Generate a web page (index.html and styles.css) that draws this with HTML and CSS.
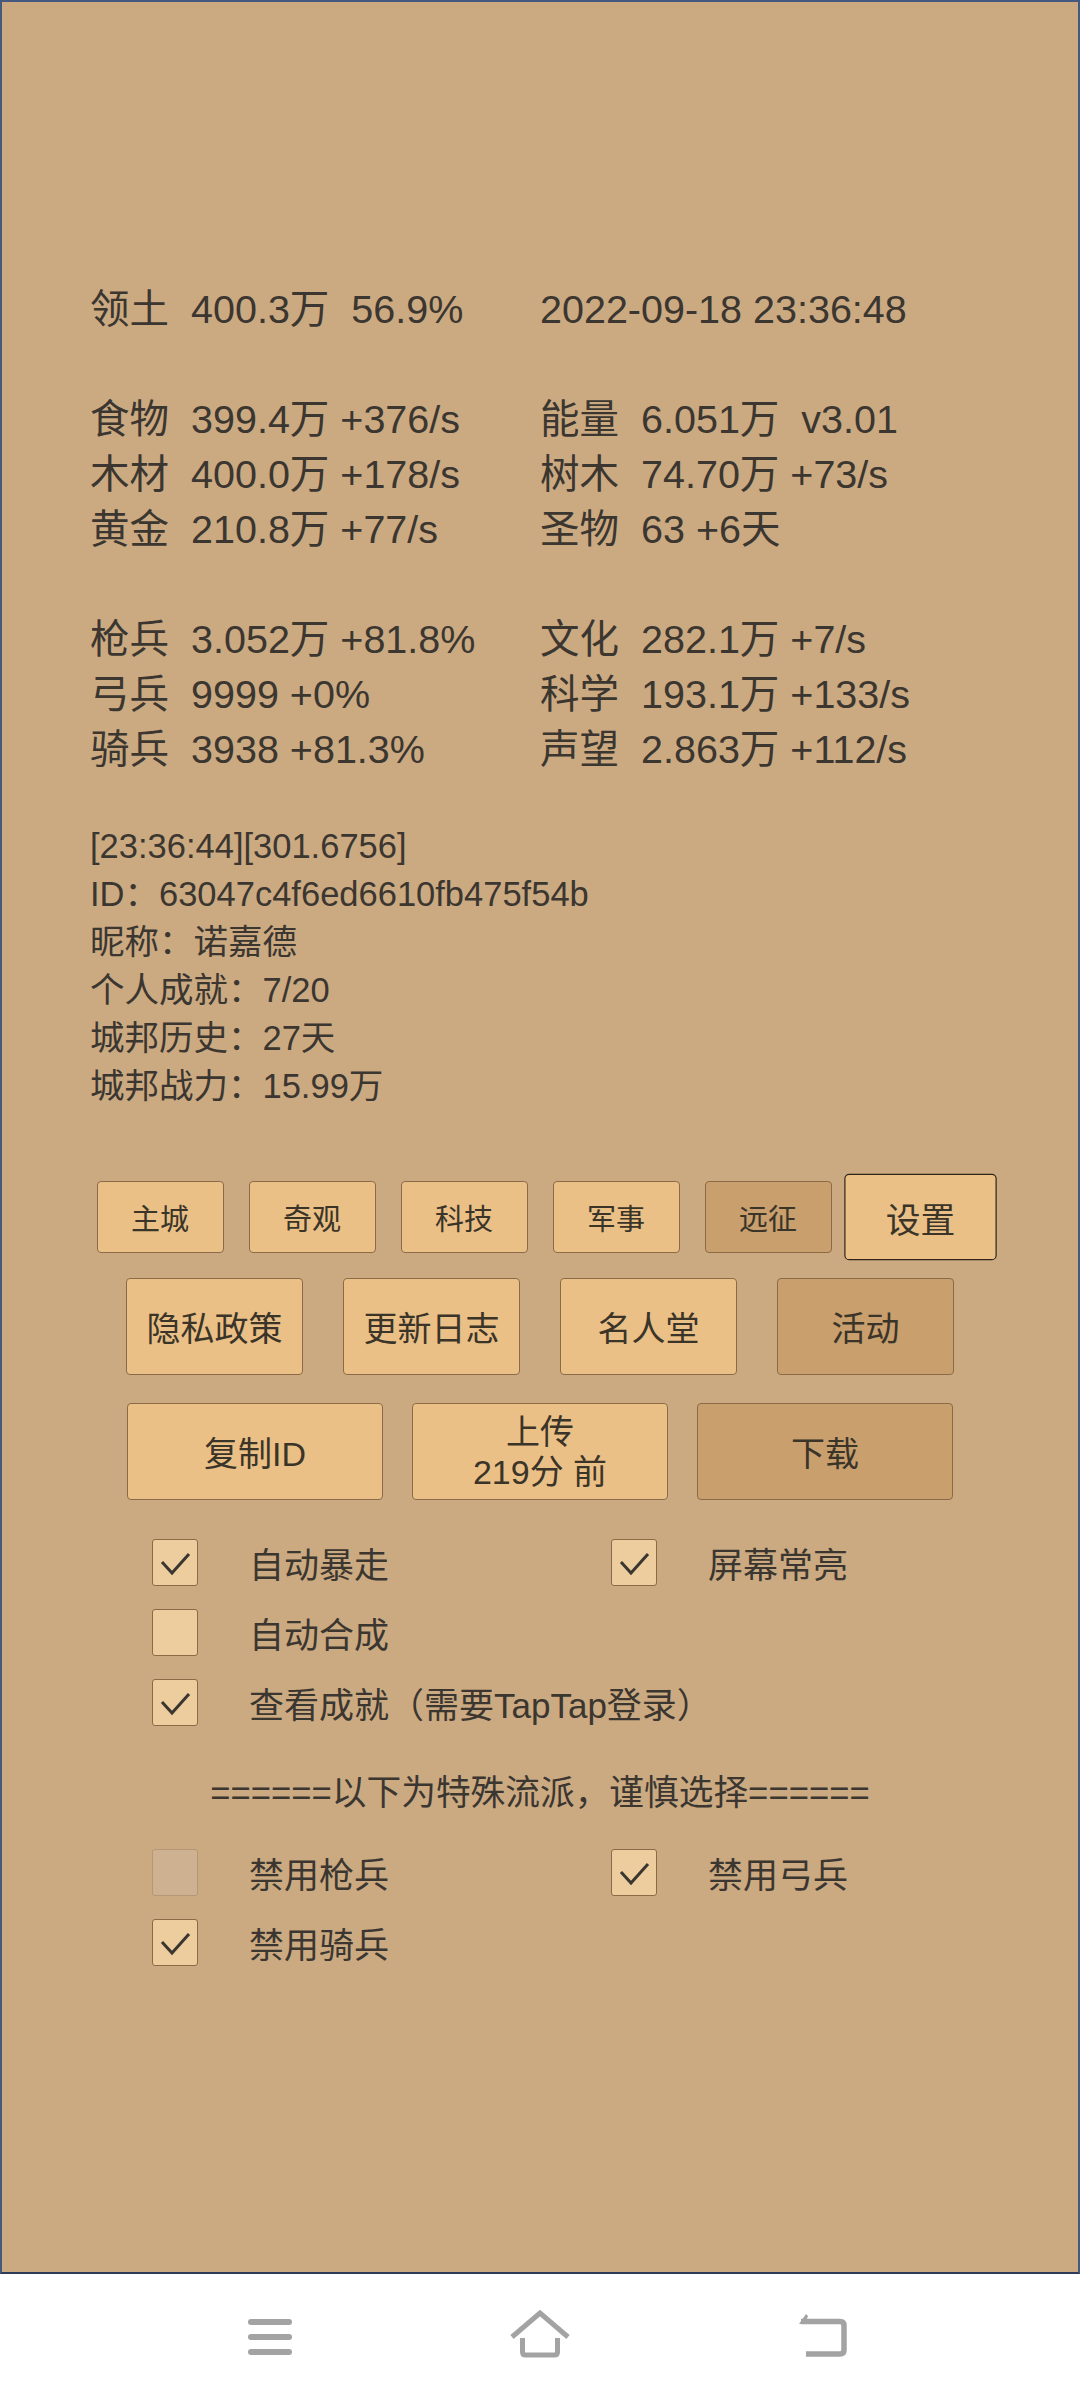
FILE: index.html
```html
<!DOCTYPE html>
<html lang="zh">
<head>
<meta charset="utf-8">
<title>城邦</title>
<link rel="stylesheet" href="styles.css">
</head>
<body>
<div class="panel">
  <div class="stats">
    <div class="cell"><span class="k">领土</span><span class="v">400.3万  56.9%</span></div>
    <div class="cell"><span class="v">2022-09-18 23:36:48</span></div>
    <div class="blank"></div>
    <div class="cell"><span class="k">食物</span><span class="v">399.4万 +376/s</span></div>
    <div class="cell"><span class="k">能量</span><span class="v">6.051万  v3.01</span></div>
    <div class="cell"><span class="k">木材</span><span class="v">400.0万 +178/s</span></div>
    <div class="cell"><span class="k">树木</span><span class="v">74.70万 +73/s</span></div>
    <div class="cell"><span class="k">黄金</span><span class="v">210.8万 +77/s</span></div>
    <div class="cell"><span class="k">圣物</span><span class="v">63 +6天</span></div>
    <div class="blank"></div>
    <div class="cell"><span class="k">枪兵</span><span class="v">3.052万 +81.8%</span></div>
    <div class="cell"><span class="k">文化</span><span class="v">282.1万 +7/s</span></div>
    <div class="cell"><span class="k">弓兵</span><span class="v">9999 +0%</span></div>
    <div class="cell"><span class="k">科学</span><span class="v">193.1万 +133/s</span></div>
    <div class="cell"><span class="k">骑兵</span><span class="v">3938 +81.3%</span></div>
    <div class="cell"><span class="k">声望</span><span class="v">2.863万 +112/s</span></div>
  </div>

  <div class="info">
    <div>[23:36:44][301.6756]</div>
    <div>ID：63047c4f6ed6610fb475f54b</div>
    <div>昵称：诺嘉德</div>
    <div>个人成就：7/20</div>
    <div>城邦历史：27天</div>
    <div>城邦战力：15.99万</div>
  </div>

  <div class="btnrow row1">
    <div class="btn small">主城</div>
    <div class="btn small">奇观</div>
    <div class="btn small">科技</div>
    <div class="btn small">军事</div>
    <div class="btn small dark">远征</div>
    <div class="btn small active">设置</div>
  </div>
  <div class="btnrow row2">
    <div class="btn mid">隐私政策</div>
    <div class="btn mid">更新日志</div>
    <div class="btn mid">名人堂</div>
    <div class="btn mid dark">活动</div>
  </div>
  <div class="btnrow row3">
    <div class="btn wide">复制ID</div>
    <div class="btn wide two"><span>上传</span><span>219分 前</span></div>
    <div class="btn wide dark">下载</div>
  </div>

  <div class="checks first">
    <div class="opt"><span class="box on"><svg viewBox="0 0 46 47" width="46" height="47"><path d="M10 23 L20 34 L37 15" fill="none" stroke="#3b3630" stroke-width="3"/></svg></span><span class="lbl">自动暴走</span></div>
    <div class="opt"><span class="box on"><svg viewBox="0 0 46 47" width="46" height="47"><path d="M10 23 L20 34 L37 15" fill="none" stroke="#3b3630" stroke-width="3"/></svg></span><span class="lbl">屏幕常亮</span></div>
    <div class="opt"><span class="box"></span><span class="lbl">自动合成</span></div>
    <div class="opt"></div>
    <div class="opt span2"><span class="box on"><svg viewBox="0 0 46 47" width="46" height="47"><path d="M10 23 L20 34 L37 15" fill="none" stroke="#3b3630" stroke-width="3"/></svg></span><span class="lbl">查看成就（需要TapTap登录）</span></div>
  </div>

  <div class="warn">======以下为特殊流派，谨慎选择======</div>

  <div class="checks second">
    <div class="opt"><span class="box disabled"></span><span class="lbl">禁用枪兵</span></div>
    <div class="opt"><span class="box on"><svg viewBox="0 0 46 47" width="46" height="47"><path d="M10 23 L20 34 L37 15" fill="none" stroke="#3b3630" stroke-width="3"/></svg></span><span class="lbl">禁用弓兵</span></div>
    <div class="opt"><span class="box on"><svg viewBox="0 0 46 47" width="46" height="47"><path d="M10 23 L20 34 L37 15" fill="none" stroke="#3b3630" stroke-width="3"/></svg></span><span class="lbl">禁用骑兵</span></div>
  </div>
</div>

<div class="navbar">
  <svg class="nav-menu" width="44" height="36" viewBox="0 0 44 36"><rect x="0" y="0" width="44" height="6" rx="3" fill="#a3a3a3"/><rect x="0" y="15" width="44" height="6" rx="3" fill="#a3a3a3"/><rect x="0" y="30" width="44" height="6" rx="3" fill="#a3a3a3"/></svg>
  <svg class="nav-home" width="60" height="48" viewBox="0 0 60 48"><path d="M2 27 L30 3 L58 27" fill="none" stroke="#a3a3a3" stroke-width="5" stroke-linejoin="miter"/><path d="M12.5 28 V42 Q12.5 45 15.5 45 H44.5 Q47.5 45 47.5 42 V28" fill="none" stroke="#a3a3a3" stroke-width="5"/></svg>
  <svg class="nav-back" width="52" height="48" viewBox="0 0 52 48"><path d="M5 10.5 H44 Q48 10.5 48 14.5 V39 Q48 43 44 43 H10" fill="none" stroke="#a3a3a3" stroke-width="5.5"/><path d="M3 13 L10 3 L12 5 L9 13 Z" fill="#a3a3a3"/></svg>
</div>
</body>
</html>
```

FILE: styles.css
```css
html, body {
  margin: 0;
  padding: 0;
  background: #ffffff;
}

body {
  width: 1080px;
  font-family: "Liberation Sans", "Noto Sans CJK SC", sans-serif;
  color: #3b3630;
}

.panel {
  box-sizing: border-box;
  width: 1080px;
  height: 2274px;
  background: #cbaa82;
  border: 2px solid #45587d;
  border-bottom-color: #2d3b58;
  padding-top: 280px;
}

.stats {
  display: grid;
  grid-template-columns: 450px 450px;
  grid-auto-rows: 55px;
  padding-left: 88px;
  font-size: 39.5px;
  line-height: 55px;
}

.stats .blank {
  grid-column: 1 / -1;
}

.cell {
  white-space: pre;
}

.k {
  margin-right: 22px;
}

.info {
  margin-top: 45px;
  padding-left: 88px;
  font-size: 34.5px;
  line-height: 48px;
}

.btnrow {
  display: flex;
  justify-content: center;
}

.row1 { margin-top: 71px; gap: 25px; }
.row2 { margin-top: 25px; gap: 40px; }
.row3 { margin-top: 28px; gap: 29px; }

.btn {
  box-sizing: border-box;
  display: flex;
  align-items: center;
  justify-content: center;
  background: #eac087;
  border: 1px solid #8b6b47;
  border-radius: 4px;
  color: #3b3428;
}

.btn.dark {
  background: #c89f6d;
}

.btn.small {
  width: 127px;
  height: 72px;
  font-size: 29px;
}

.btn.active {
  transform: scale(1.2);
  border-color: #2e2418;
}

.btn.mid {
  width: 177px;
  height: 97px;
  font-size: 34px;
}

.btn.wide {
  width: 256px;
  height: 97px;
  font-size: 34px;
}

.btn.two {
  flex-direction: column;
  line-height: 40px;
}

.checks {
  display: grid;
  grid-template-columns: 459px 459px;
  grid-auto-rows: 70px;
  padding-left: 150px;
  font-size: 35px;
}

.checks.first { margin-top: 27px; }
.checks.second { margin-top: 20px; }

.opt {
  display: flex;
  align-items: center;
  white-space: nowrap;
}

.opt.span2 {
  grid-column: 1 / -1;
}

.box {
  box-sizing: border-box;
  width: 46px;
  height: 47px;
  flex: none;
  margin-right: 51px;
  background: #edcd9d;
  border: 1px solid #8b6b47;
  border-radius: 3px;
  display: flex;
}

.box svg {
  display: block;
  margin: -1px;
}

.box.disabled {
  background: #cdb190;
  border-color: #b59775;
}

.warn {
  margin-top: 32px;
  text-align: center;
  font-size: 34.7px;
  line-height: 48px;
}

.navbar {
  height: 126px;
  display: flex;
  align-items: center;
  padding-left: 248px;
}

.nav-home { margin-left: 218px; margin-top: -6px; }
.nav-back { margin-left: 226px; margin-top: -4px; }
```
